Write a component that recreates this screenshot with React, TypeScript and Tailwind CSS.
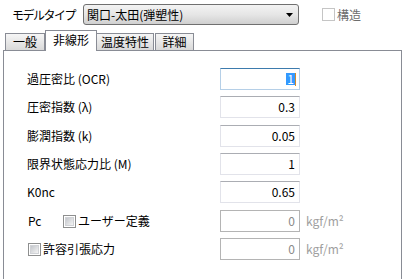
import React from "react";

const FONT = "font-['Noto_Sans_CJK_JP','Noto_Sans',sans-serif]";

interface Row {
  label: string;
  value: string;
  h: string;
}

const ROWS: Row[] = [
  { label: "圧密指数 (λ)", value: "0.3", h: "h-[29px]" },
  { label: "膨潤指数 (k)", value: "0.05", h: "h-[28px]" },
  { label: "限界状態応力比 (M)", value: "1", h: "h-[28px]" },
  { label: "K0nc", value: "0.65", h: "h-[29px]" },
];

function CheckBox({ disabled }: { disabled?: boolean }) {
  if (disabled) {
    return <span className="inline-block w-[13px] h-[13px] border border-[#c5c5c5] bg-white" />;
  }
  return (
    <span className="inline-flex items-center justify-center w-[13px] h-[13px] border border-[#8e8f8f] bg-white">
      <span className="w-[9px] h-[9px] bg-gradient-to-br from-[#c4c7cc] to-[#f4f4f4] border border-[#d0d2d6]" />
    </span>
  );
}

function TextBox({ value, disabled }: { value: string; disabled?: boolean }) {
  return (
    <div
      className={`w-[80px] h-[22px] flex items-center justify-end pr-[4px] bg-white border ${
        disabled
          ? "border-[#b4b4b4] text-[#8a8a8a]"
          : "border-[#e2e3ea] border-t-[#abadb3] text-black"
      }`}
    >
      {value}
    </div>
  );
}

export default function App() {
  return (
    <div className={`w-[409px] h-[279px] overflow-hidden bg-white text-[12px] leading-none ${FONT}`}>
      {/* model type row */}
      <div className="flex items-center pt-[4px] h-[25px]">
        <span className="ml-[12px] w-[71px] whitespace-nowrap tracking-[-1.5px] text-black">モデルタイプ</span>
        <div className="w-[216px] h-[21px] flex items-center rounded-[3px] border border-[#707070] bg-gradient-to-b from-[#f3f3f3] via-[#e6e6e6] to-[#d0d0d0] pl-[3px] pr-[5px]">
          <span className="flex-1 text-black whitespace-nowrap">関口-太田(弾塑性)</span>
          <svg width="7" height="4" viewBox="0 0 7 4">
            <path d="M0 0h7L3.5 4z" fill="#000" />
          </svg>
        </div>
        <span className="ml-[23px] flex items-center gap-[2px] text-[#6d6d6d]">
          <CheckBox disabled />
          構造
        </span>
      </div>

      {/* tabs */}
      <div className="flex items-end mt-[4px] ml-[5px] h-[21px] relative z-10">
        <div className="w-[40px] h-[17px] flex items-center justify-center border border-b-0 border-[#898c95] bg-gradient-to-b from-[#f6f6f6] to-[#d9d9d9]">
          一般
        </div>
        <div className="w-[52px] h-[21px] -mb-px pb-[3px] flex items-center justify-center border border-b-0 border-[#898c95] bg-white">
          非線形
        </div>
        <div className="w-[57px] h-[17px] flex items-center justify-center border border-b-0 border-l-0 border-[#898c95] bg-gradient-to-b from-[#f6f6f6] to-[#d9d9d9]">
          温度特性
        </div>
        <div className="w-[39px] h-[17px] ml-px flex items-center justify-center border border-b-0 border-[#898c95] bg-gradient-to-b from-[#f6f6f6] to-[#d9d9d9]">
          詳細
        </div>
      </div>

      {/* panel */}
      <div className="ml-[3px] w-[399px] h-[240px] border border-[#898c95] bg-white pt-[17px] pl-[23px]">
        <div className="flex items-start h-[28px]">
          <div className="flex items-center h-[22px]">
            <span className="w-[193px]">過圧密比 (OCR)</span>
            <div className="w-[80px] h-[22px] flex items-center justify-end pr-[3px] bg-white border border-[#b5cfe7] border-t-[#3d7bad]">
              <span className="bg-[#3399ff] text-white px-px">1</span>
              <span className="w-px h-[13px] bg-[#d08a2c]" />
            </div>
          </div>
        </div>
        {ROWS.map((r) => (
          <div key={r.label} className={`flex items-start ${r.h}`}>
            <div className="flex items-center h-[22px]">
              <span className="w-[193px]">{r.label}</span>
              <TextBox value={r.value} />
            </div>
          </div>
        ))}
        <div className="flex items-start h-[28px]">
          <div className="flex items-center h-[22px]">
            <span className="w-[36px] pl-px">Pc</span>
            <span className="w-[157px] flex items-center gap-[2px]">
              <CheckBox />
              ユーザー定義
            </span>
            <TextBox value="0" disabled />
            <span className="ml-[6px] text-[#a0a0a0]">kgf/m²</span>
          </div>
        </div>
        <div className="flex items-start h-[28px]">
          <div className="flex items-center h-[22px]">
            <span className="w-[193px] flex items-center gap-[2px] pl-px">
              <CheckBox />
              許容引張応力
            </span>
            <TextBox value="0" disabled />
            <span className="ml-[6px] text-[#a0a0a0]">kgf/m²</span>
          </div>
        </div>
      </div>
    </div>
  );
}
